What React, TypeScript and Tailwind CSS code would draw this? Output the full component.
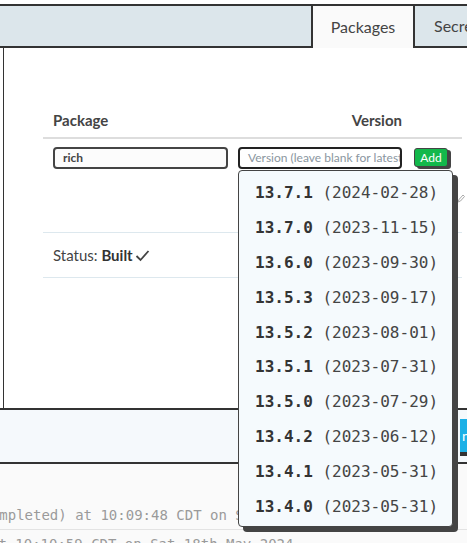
const versions = [
  ["13.7.1", "2024-02-28"],
  ["13.7.0", "2023-11-15"],
  ["13.6.0", "2023-09-30"],
  ["13.5.3", "2023-09-17"],
  ["13.5.2", "2023-08-01"],
  ["13.5.1", "2023-07-31"],
  ["13.5.0", "2023-07-29"],
  ["13.4.2", "2023-06-12"],
  ["13.4.1", "2023-05-31"],
  ["13.4.0", "2023-05-31"],
];

const App = () => {
  return (
    <div className="relative w-[467px] h-[543px] overflow-hidden bg-white pt-1 font-['Lato','Open_Sans',sans-serif] text-[#444]">
      {/* Tabs */}
      <div className="flex h-[44px]">
        <div className="flex-1 bg-[#dce6eb] border-t-2 border-b-2 border-[#333]" />
        <div className="w-[104px] shrink-0 bg-[#fafafa] border-2 border-b-0 border-[#333] flex items-center justify-center text-[16px]">
          Packages
        </div>
        <div className="w-[52px] shrink-0 bg-[#dce6eb] border-t-2 border-b-2 border-[#333] pl-[19px] flex items-center text-[16px] whitespace-nowrap overflow-hidden">
          Secrets
        </div>
      </div>

      {/* Packages panel */}
      <div className="ml-[3px] h-[360px] border-l border-[#333] pt-[62px] pl-[39px] pr-[5px]">
        <div className="grid grid-cols-[175px_164px_auto] gap-x-[10px] px-[10px] pb-[7px] border-b-2 border-[#ddd] text-[15px] font-bold leading-[20px]">
          <div>Package</div>
          <div className="text-right">Version</div>
          <div />
        </div>
        <div className="mt-[8px] grid grid-cols-[175px_164px_auto] gap-x-[10px] px-[10px]">
          <div className="h-[22px] border-2 border-[#444] rounded-[4px] bg-[#fcfcfc] pl-[8px] flex items-center text-[12px] font-bold">
            rich
          </div>
          <div className="h-[22px] border-2 border-[#222] rounded-[4px] bg-white pl-[8px] flex items-center text-[12px] text-[#8a96a0] whitespace-nowrap overflow-hidden">
            Version (leave blank for latest)
          </div>
          <div className="pl-[2px] pt-[1px]">
            <div className="w-[34px] h-[19px] bg-[#13b84b] border border-[#444] rounded-[3px] shadow-[3px_2px_0_#444] flex items-center justify-center text-[12px] text-white">
              Add
            </div>
          </div>
        </div>
        <div className="h-[63px] flex justify-end pt-[25px]">
          <svg width="8" height="9" viewBox="0 0 8 9" className="mr-[-3px]">
            <path d="M1 8 L2 5.5 L6 1 L7.5 2.5 L3.5 7 Z" fill="none" stroke="#aaa" strokeWidth="1" />
          </svg>
        </div>
        <div className="h-[46px] border-t border-b border-[#dde8ee] flex items-center pl-[10px] text-[15px]">
          <span>Status:&nbsp;</span>
          <span className="font-bold text-[#333]">Built</span>
          <svg width="15" height="13" viewBox="0 0 15 13" className="ml-[2px]">
            <path d="M1.5 7 L5.5 11 L13.5 2" fill="none" stroke="#444" strokeWidth="1.8" />
          </svg>
        </div>
      </div>

      {/* Actions panel */}
      <div className="h-[56px] border-t-2 border-b-2 border-[#333] bg-[#f5f9fc] flex justify-end pt-[9px]">
        <div className="w-[60px] mr-[-53px] h-[33px] bg-[#1cb0e6] shadow-[0_4px_0_#333] flex items-center pl-[2px] text-white text-[14px]">
          n
        </div>
      </div>

      {/* Log */}
      <div className="bg-[#fafafa] pt-[38px] font-['DejaVu_Sans_Mono',monospace] text-[14px] text-[#9a9a9a] whitespace-nowrap">
        <div className="h-[28px] border-b border-[#e3e3e3] flex items-center ml-[-26px]">
          (completed) at 10:09:48 CDT on Sat 18th May 2024
        </div>
        <div className="h-[28px] flex items-center ml-[-10px]">
          at 10:10:59 CDT on Sat 18th May 2024
        </div>
      </div>

      {/* Version dropdown */}
      <div className="absolute left-[238px] top-[170px] w-[215px] h-[357px] bg-[#f5fafd] border border-[#444] rounded-[4px] shadow-[5px_5px_0_#444] pt-[5px] font-['DejaVu_Sans_Mono',monospace] text-[16px] text-[#444]">
        {versions.map(([v, d]) => (
          <div key={v} className="h-[34.8px] flex items-center pl-[16px] whitespace-nowrap">
            <span className="font-bold text-[#333]">{v}</span>
            <span>&nbsp;({d})</span>
          </div>
        ))}
      </div>
    </div>
  );
};

export default App;
